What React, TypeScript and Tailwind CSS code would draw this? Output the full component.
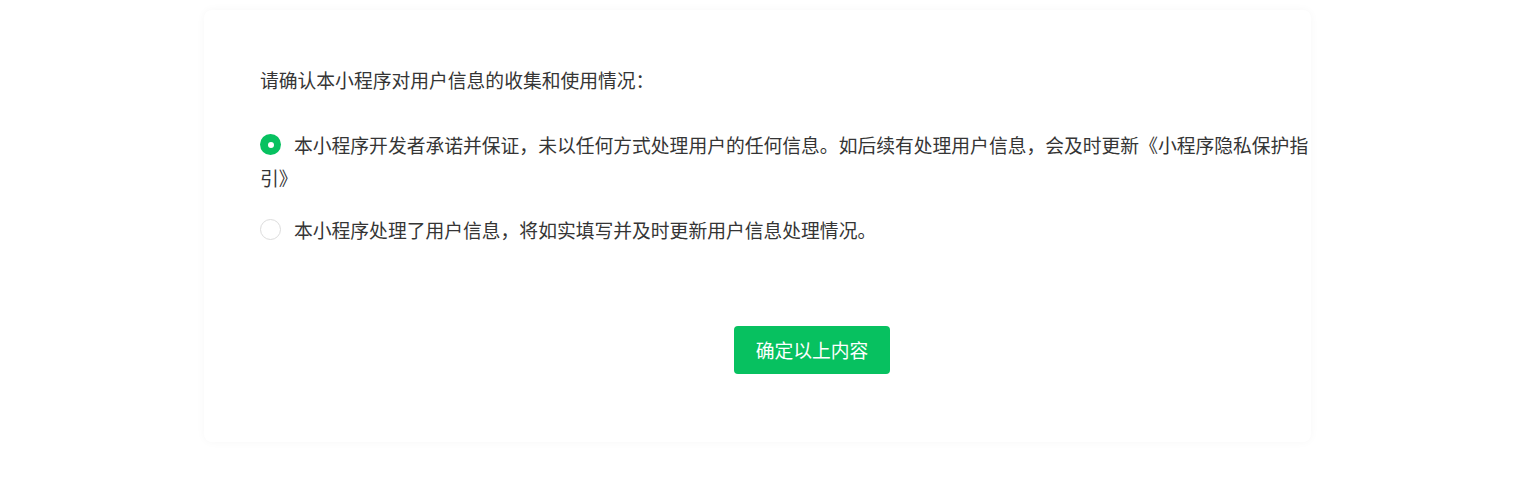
const options = [
  {
    label:
      '本小程序开发者承诺并保证，未以任何方式处理用户的任何信息。如后续有处理用户信息，会及时更新《小程序隐私保护指引》',
    checked: true,
  },
  {
    label: '本小程序处理了用户信息，将如实填写并及时更新用户信息处理情况。',
    checked: false,
  },
];

const Radio = ({ checked }: { checked: boolean }) =>
  checked ? (
    <span className="mr-[13px] mt-[6px] inline-flex h-[21px] w-[21px] items-center justify-center rounded-full bg-[#07c160] align-top">
      <span className="h-[6px] w-[6px] rounded-full bg-white" />
    </span>
  ) : (
    <span className="mr-[13px] mt-[6px] inline-block h-[21px] w-[21px] rounded-full border border-[#dcdcdc] bg-white align-top" />
  );

export default function App() {
  return (
    <div
      className="min-h-[493px] bg-white pt-[10px] text-[#353535]"
      style={{ fontFamily: '"Noto Sans CJK SC", "Noto Sans", sans-serif' }}
    >
      <div className="ml-[204px] h-[432px] w-[1107px] rounded-lg bg-white pl-[56px] pt-[53px] shadow-[0_0_10px_rgba(0,0,0,0.035)]">
        <div className="w-[1104px]">
          <p className="text-[18.8px] leading-[33px]">请确认本小程序对用户信息的收集和使用情况：</p>

          <div className="mt-[32px] flex flex-col gap-[19px]">
            {options.map((opt, i) => (
              <label key={i} className="block w-[1060px] text-[18.8px] leading-[33px]">
                <Radio checked={opt.checked} />
                {opt.label}
              </label>
            ))}
          </div>

          <div className="mt-[80px] flex justify-center">
            <button className="h-[48px] w-[156px] rounded bg-[#07c160] text-[18.8px] text-white">
              确定以上内容
            </button>
          </div>
        </div>
      </div>
    </div>
  );
}
